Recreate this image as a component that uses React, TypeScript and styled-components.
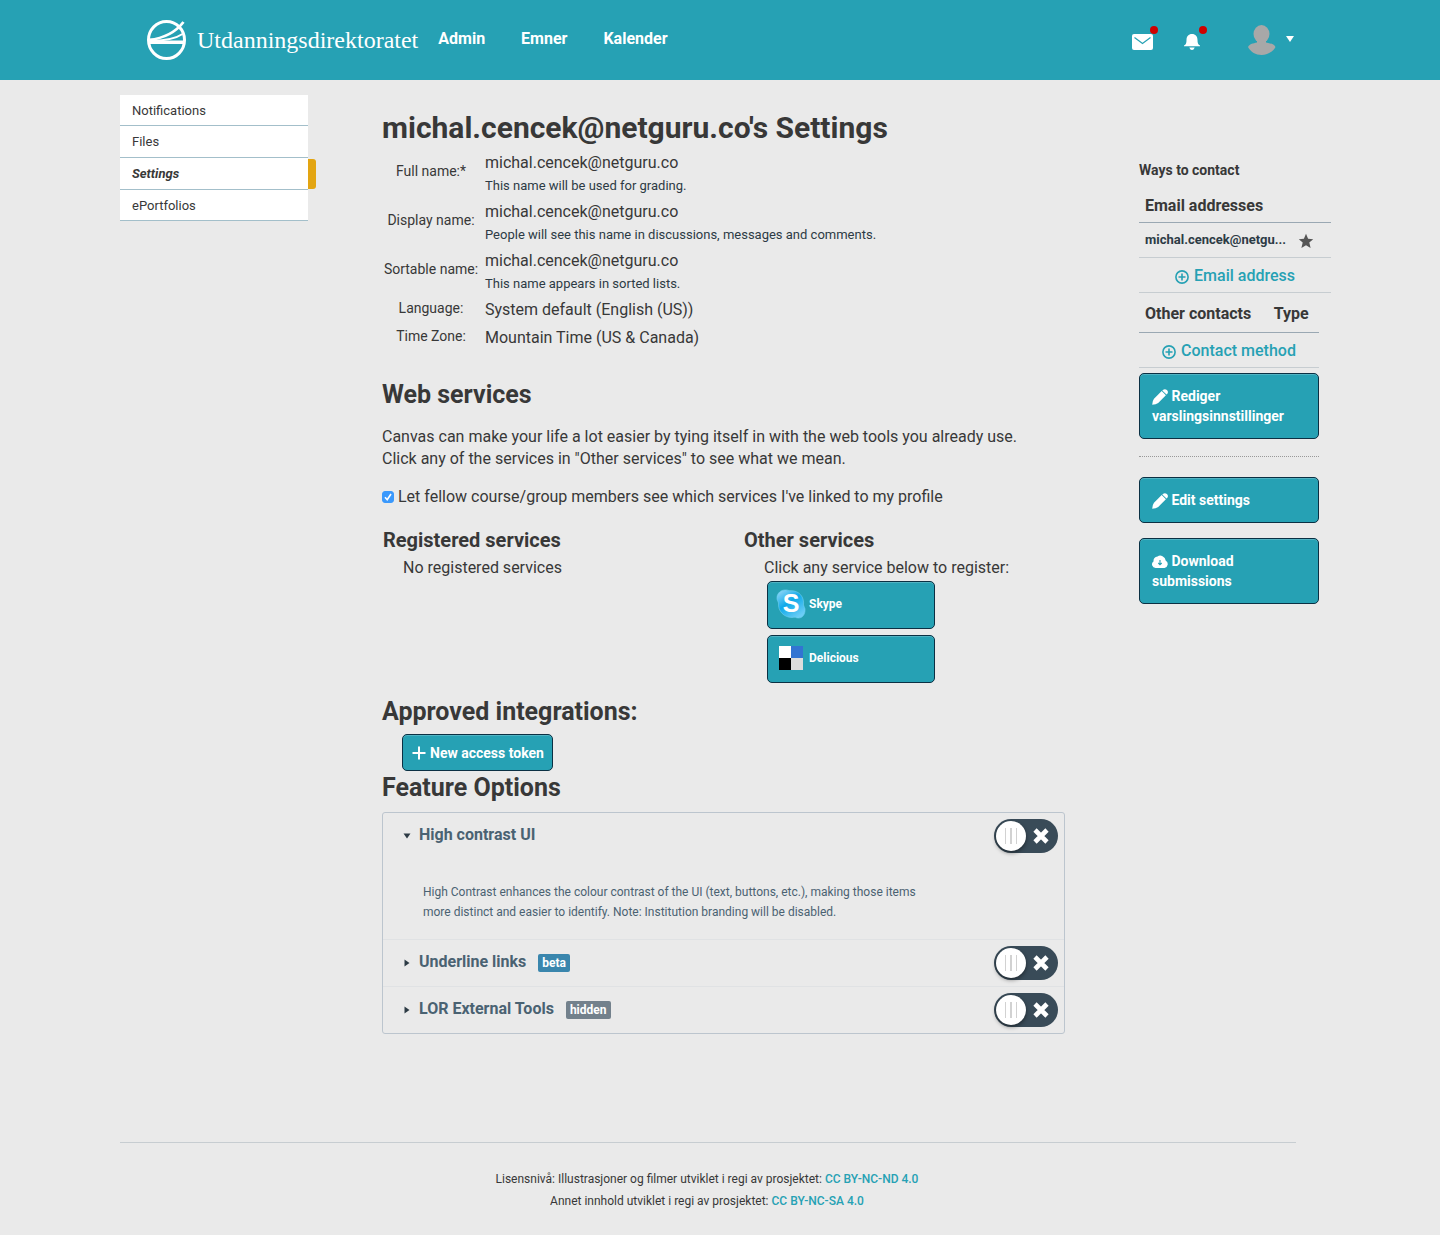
import React, { useState } from "react";
import styled, { createGlobalStyle } from "styled-components";

const teal = "#26a1b4";
const ink = "#383838";

const GlobalStyle = createGlobalStyle`
  *, *::before, *::after { box-sizing: border-box; }
  html { background: #eaeaea; }
  body {
    margin: 0;
    color: ${ink};
    font: 400 16px/22px Roboto, "Liberation Sans", sans-serif;
  }
  a { color: ${teal}; text-decoration: none; }
  button { font: inherit; cursor: pointer; }
`;

const Header = styled.header`
  display: flex;
  align-items: center;
  height: 80px;
  padding: 0 144px 0 146px;
  background: ${teal};
`;

const Brand = styled.a`
  display: flex;
  align-items: center;
  gap: 10px;
  color: #fff;
  font: 400 24px/40px "Liberation Serif", serif;
`;

const Nav = styled.nav`
  display: flex;
  gap: 36px;
  margin-left: 20px;
  padding-bottom: 2px;
`;

const NavLink = styled.a`
  color: #fff;
  font-weight: 700;
`;

const HeaderTools = styled.div`
  display: flex;
  align-items: center;
  margin-left: auto;
`;

const IconButton = styled.button<{ $gap: number }>`
  position: relative;
  display: flex;
  margin: 4px 0 0 ${(p) => p.$gap}px;
  padding: 0;
  border: 0;
  background: none;
`;

const Dot = styled.span`
  position: absolute;
  top: -8px;
  right: -5px;
  width: 8px;
  height: 8px;
  border-radius: 50%;
  background: #d00000;
`;

const UserButton = styled.button`
  display: flex;
  align-items: center;
  gap: 10px;
  margin: 0 0 0 46px;
  padding: 0 2px 0 0;
  border: 0;
  background: none;
`;

const Page = styled.div`
  display: flex;
  align-items: flex-start;
  padding: 15px 121px 0 120px;
`;

const SideMenu = styled.nav`
  flex: 0 0 188px;
  display: flex;
  flex-direction: column;
`;

const SideLink = styled.a<{ $active?: boolean }>`
  position: relative;
  height: 32px;
  padding: 0 12px;
  border-bottom: 1px solid #a3bfca;
  background: #fff;
  color: ${ink};
  font-size: 13px;
  line-height: 31px;
  font-weight: ${(p) => (p.$active ? 700 : 400)};
  font-style: ${(p) => (p.$active ? "italic" : "normal")};
  &:first-child, &:last-child { height: 31px; }
  &::after {
    content: "";
    display: ${(p) => (p.$active ? "block" : "none")};
    position: absolute;
    top: 1px;
    left: 100%;
    width: 8px;
    height: 30px;
    border-radius: 0 3px 3px 0;
    background: #e3a512;
  }
`;

const Main = styled.main`
  flex: 1;
  min-width: 0;
  padding: 13px 74px 0;
`;

const Title = styled.h1`
  margin: 0;
  font-size: 30px;
  line-height: 40px;
  font-weight: 700;
`;

const Heading = styled.h2<{ $top?: number }>`
  margin: ${(p) => p.$top ?? 0}px 0 0;
  font-size: 25px;
  line-height: 34px;
  font-weight: 700;
`;

const SubHeading = styled.h3`
  margin: 0 0 5px;
  font-size: 20px;
  line-height: 24px;
  font-weight: 700;
`;

const Profile = styled.table`
  border-spacing: 0;
  th {
    width: 98px;
    padding: 0 0 3px;
    font-size: 14px;
    line-height: 20px;
    font-weight: 400;
    white-space: nowrap;
  }
  td { padding: 4px 0 2px 5px; }
`;

const Hint = styled.div`
  margin-top: 3px;
  color: #2d3b45;
  font-size: 13px;
  line-height: 18px;
`;

const Intro = styled.p`
  max-width: 660px;
  margin: 14px 0 16px;
`;

const CheckLabel = styled.label`
  display: flex;
  align-items: center;
  gap: 4px;
`;

const Checkbox = styled.input`
  appearance: none;
  width: 12px;
  height: 12px;
  margin: 0;
  border-radius: 3px;
  border: 1px solid #999;
  background: #fff;
  & + svg { margin-left: -16px; display: none; }
  &:checked { border-color: #3b99fc; background: #3b99fc; }
  &:checked + svg { display: block; }
`;

const Services = styled.div`
  display: grid;
  grid-template-columns: 361fr 321fr;
  margin: 20px 0 12px;
  padding-left: 1px;
`;

const Indent = styled.div`
  padding-left: 20px;
`;

const ServiceList = styled.div`
  display: flex;
  flex-direction: column;
  align-items: flex-start;
  gap: 6px;
  padding: 2px 0 0 3px;
`;

const ActionButton = styled.button`
  display: block;
  width: 100%;
  padding: 12px;
  border: 1px solid #0b3043;
  border-radius: 5px;
  background: ${teal};
  box-shadow: inset 0 1px 0 rgba(255, 255, 255, 0.2);
  color: #fff;
  font-size: 14px;
  line-height: 20px;
  font-weight: 700;
  text-align: left;
  svg { vertical-align: -4px; }
`;

const ServiceButton = styled(ActionButton)`
  display: flex;
  align-items: center;
  gap: 3px;
  width: 168px;
  height: 48px;
  padding: 0 8px 2px;
  font-size: 12px;
`;

const TokenButton = styled(ActionButton)`
  display: flex;
  align-items: center;
  gap: 4px;
  width: auto;
  margin-top: 5px;
  padding: 8px 8px 7px 9px;
`;

const Features = styled.div`
  margin-top: 7px;
  border: 1px solid #bcc5ce;
  border-radius: 3px;
`;

const Feature = styled.section`
  & + & { border-top: 1px solid #e0e2e4; }
`;

const FeatureHead = styled.div`
  display: flex;
  align-items: center;
  justify-content: space-between;
  height: 46px;
  padding: 0 6px 0 20px;
`;

const FeatureTitle = styled.button`
  display: flex;
  align-items: center;
  padding: 0 0 3px;
  border: 0;
  background: none;
  color: #4a6272;
  font-weight: 700;
  svg { margin: 3px 8px 0 0; }
`;

const Tag = styled.span<{ $tone: string }>`
  margin: 2px 0 0 12px;
  padding: 0 4px;
  border-radius: 2px;
  background: ${(p) => p.$tone};
  color: #fff;
  font-size: 12px;
  line-height: 18px;
`;

const FeatureText = styled.p`
  max-width: 560px;
  margin: 0;
  padding: 23px 0 17px 40px;
  color: #4a6272;
  font-size: 12px;
  line-height: 20px;
`;

const Toggle = styled.label`
  position: relative;
  display: flex;
  align-items: center;
  width: 64px;
  height: 34px;
  padding: 2px;
  border-radius: 17px;
  background: #394b58;
  cursor: pointer;
  input { position: absolute; opacity: 0; inset: 0; margin: 0; }
`;

const Knob = styled.span`
  display: flex;
  align-items: center;
  justify-content: center;
  width: 30px;
  height: 30px;
  margin-right: 7px;
  border-radius: 50%;
  background: #fff;
  box-shadow: 0 2px 4px rgba(0, 0, 0, 0.45);
`;

const Aside = styled.aside`
  flex: 0 0 180px;
  min-width: 0;
  padding-top: 65px;
`;

const AsideTitle = styled.h2`
  margin: 0 0 6px;
  font-size: 14px;
  line-height: 20px;
  font-weight: 700;
`;

const Contacts = styled.table<{ $width: number; $head: number }>`
  width: ${(p) => p.$width}px;
  border-collapse: separate;
  border-spacing: 0;
  th {
    height: ${(p) => p.$head}px;
    padding: 3px 6px 0;
    border-bottom: 1px solid #9aa8b3;
    text-align: left;
    font-weight: 700;
    white-space: nowrap;
  }
  td {
    height: 35px;
    padding: 0 6px;
    border-bottom: 1px solid #c7cdd1;
  }
  svg { vertical-align: middle; }
`;

const AddressCell = styled.td`
  width: 152px;
  color: #2d3b45;
  font-size: 13px;
  font-weight: 700;
  white-space: nowrap;
`;

const AddLink = styled.a`
  display: flex;
  align-items: center;
  justify-content: center;
  gap: 5px;
  padding-top: 2px;
  font-weight: 500;
  svg { margin-top: 2px; }
`;

const Actions = styled.div`
  display: flex;
  flex-direction: column;
  gap: 15px;
  margin-top: 5px;
`;

const Divider = styled.hr`
  width: 100%;
  margin: 2px 0 5px;
  border: 0;
  border-top: 1px dotted #999;
`;

const Footer = styled.footer`
  margin: 108px 144px 0 120px;
  padding: 25px 2px 24px 0;
  border-top: 1px solid #c7cdd1;
  font-size: 12px;
  line-height: 22px;
  text-align: center;
  p { margin: 0; }
  a { font-weight: 500; }
`;

const Logo = () => (
  <svg width="41" height="42" viewBox="0 0 41 42" fill="none" stroke="#fff" aria-hidden="true">
    <ellipse cx="20.500" cy="21" rx="18" ry="18.500" strokeWidth="3" />
    <path d="M3 21C16 19.500 29 14 37.500 3" strokeWidth="2.800" />
    <path d="M6 22C19 21.500 30 19.500 36.500 15" strokeWidth="2" />
    <path d="M3 23.300H38" strokeWidth="3.400" />
  </svg>
);

const Mail = () => (
  <svg width="21" height="16" viewBox="0 0 21 16" aria-hidden="true">
    <rect width="21" height="16" rx="2" fill="#fff" />
    <path d="M2.500 3.500L10.500 9.500L18.500 3.500" fill="none" stroke={teal} strokeWidth="1.200" />
  </svg>
);

const Bell = () => (
  <svg width="18" height="16" viewBox="0 0 18 16" fill="#fff" aria-hidden="true">
    <path d="M0 12.300V11.500C2 10.500 2.500 9 2.500 6C2.500 2.500 4.500 0 8 0S13.500 2.500 13.500 6C13.500 9 14 10.500 16 11.500V12.300ZM5.300 13.500H10.700C10 15.200 9.200 16 8 16S6 15.200 5.300 13.500Z" />
  </svg>
);

const Avatar = () => (
  <svg width="28" height="30" viewBox="0 0 28 30" fill="#a8a8a8" aria-hidden="true">
    <ellipse cx="13.500" cy="9" rx="8" ry="9" />
    <path d="M9 14H18V17.500C22 18.500 26 18.500 27.500 22C25 27 19 30 13.500 30S2.500 27 0 22C2 18.500 5 18.500 9 17.500Z" />
  </svg>
);

const Caret = () => (
  <svg width="8" height="8" viewBox="0 0 8 8" fill="#fff" aria-hidden="true">
    <path d="M0 0H8L4 6Z" />
  </svg>
);

const Pencil = () => (
  <svg width="16" height="16" viewBox="0 0 16 16" fill="#fff" aria-hidden="true">
    <path d="M0.200 15.800Q0.300 11.800 2 9.700L9.700 2L13.900 6.200L6.200 13.900Q4 15.600 0.200 15.800ZM10.300 1.400L11.200 0.700Q13-0.500 14.900 1T15.200 4.900L14.500 5.600Z" />
  </svg>
);

const Cloud = () => (
  <svg width="16" height="16" viewBox="0 0 16 16" aria-hidden="true">
    <path d="M3.800 14A3.600 3.600 0 0 1 1.500 7.500A5 4.800 0 0 1 5.500 2.500Q8 0.800 10.500 2.300Q13.300 3.500 13.800 6.800A3.900 3.900 0 0 1 12.500 14Z" fill="#fff" />
    <path d="M8 6V10.500M6.300 9L8 10.800L9.700 9" fill="none" stroke={teal} strokeWidth="1.100" />
  </svg>
);

const Plus = () => (
  <svg width="14" height="14" viewBox="0 0 14 14" stroke="#fff" strokeWidth="2" aria-hidden="true">
    <path d="M7 0.500V13.500M0.500 7H13.500" />
  </svg>
);

const CirclePlus = () => (
  <svg width="14" height="14" viewBox="0 0 14 14" fill="none" stroke={teal} strokeWidth="1.600" aria-hidden="true">
    <circle cx="7" cy="7" r="6.100" />
    <path d="M7 3.500V10.500M3.500 7H10.500" />
  </svg>
);

const Star = () => (
  <svg width="16" height="16" viewBox="0 0 16 16" fill="#555" aria-label="Default" role="img">
    <path d="M8 0.800L10.100 5.800L15.200 6.200L11.300 9.600L12.600 15L8 12.200L3.400 15L4.700 9.600L0.800 6.200L5.900 5.800Z" />
  </svg>
);

const Skype = () => (
  <svg width="30" height="30" viewBox="0 0 30 30" aria-hidden="true">
    <defs>
      <linearGradient id="skype" x1="0" y1="0" x2="0.700" y2="1">
        <stop offset="0" stopColor="#9fdcf8" />
        <stop offset="0.500" stopColor="#0fa9ea" />
        <stop offset="1" stopColor="#6bcdf6" />
      </linearGradient>
    </defs>
    <g fill="url(#skype)" stroke="#6fd0f2" strokeWidth="0.600">
      <path d="M9 1C12 0.500 12 2 15 1.700C23 1.500 28.500 8 27.500 16C28 18 29.500 19 29 22C28.500 27 25 30 20.500 28.700C19 28 18 28.500 16 28.500C8 28.500 1.800 22 2.500 14C2 12 0.500 11 1 8C1.500 4 5 1 9 1Z" />
    </g>
    <text x="15" y="23" textAnchor="middle" fill="#fff" fontFamily="Liberation Sans, sans-serif" fontWeight="700" fontSize="25">S</text>
  </svg>
);

const Delicious = () => (
  <svg width="30" height="24" viewBox="0 0 30 24" aria-hidden="true">
    <path d="M3 0H15V12H3Z" fill="#fff" />
    <path d="M15 0H27V12H15Z" fill="#3274d2" />
    <path d="M3 12H15V24H3Z" fill="#000" />
    <path d="M15 12H27V24H15Z" fill="#ddd" />
  </svg>
);

const Disclosure = ({ open }: { open: boolean }) => (
  <svg width="8" height="8" viewBox="0 0 8 8" fill="#2d3b45" aria-hidden="true">
    <path d={open ? "M0.500 1.500H7.500L4 6.500Z" : "M1.500 0.500V7.500L6.500 4Z"} />
  </svg>
);

const Grip = () => (
  <svg width="12" height="16" viewBox="0 0 12 16" fill="#d2d2d2" aria-hidden="true">
    <path d="M0 0H1V16H0ZM5 0H7V16H5ZM11 0H12V16H11Z" />
  </svg>
);

const Cross = () => (
  <svg width="16" height="16" viewBox="0 0 16 16" stroke="#fff" strokeWidth="4.600" aria-hidden="true">
    <path d="M2 2L14 14M14 2L2 14" />
  </svg>
);

const profileRows = [
  { label: "Full name:*", value: "michal.cencek@netguru.co", hint: "This name will be used for grading." },
  { label: "Display name:", value: "michal.cencek@netguru.co", hint: "People will see this name in discussions, messages and comments." },
  { label: "Sortable name:", value: "michal.cencek@netguru.co", hint: "This name appears in sorted lists." },
  { label: "Language:", value: "System default (English (US))" },
  { label: "Time Zone:", value: "Mountain Time (US & Canada)" },
];

const features = [
  {
    name: "High contrast UI",
    text: "High Contrast enhances the colour contrast of the UI (text, buttons, etc.), making those items more distinct and easier to identify. Note: Institution branding will be disabled.",
  },
  { name: "Underline links", tag: "beta", tone: "#3a86ad" },
  { name: "LOR External Tools", tag: "hidden", tone: "#73818c" },
];

export default function App() {
  const [open, setOpen] = useState("High contrast UI");
  return (
    <>
      <GlobalStyle />
      <Header>
        <Brand href="#"><Logo />Utdanningsdirektoratet</Brand>
        <Nav>
          <NavLink href="#">Admin</NavLink>
          <NavLink href="#">Emner</NavLink>
          <NavLink href="#">Kalender</NavLink>
        </Nav>
        <HeaderTools>
          <IconButton $gap={0} aria-label="Messages"><Mail /><Dot /></IconButton>
          <IconButton $gap={31} aria-label="Notifications"><Bell /><Dot /></IconButton>
          <UserButton aria-label="Account"><Avatar /><Caret /></UserButton>
        </HeaderTools>
      </Header>
      <Page>
        <SideMenu>
          <SideLink href="#">Notifications</SideLink>
          <SideLink href="#">Files</SideLink>
          <SideLink href="#" $active>Settings</SideLink>
          <SideLink href="#">ePortfolios</SideLink>
        </SideMenu>
        <Main>
          <Title>michal.cencek@netguru.co's Settings</Title>
          <Profile>
            <tbody>
              {profileRows.map((row) => (
                <tr key={row.label}>
                  <th scope="row">{row.label}</th>
                  <td>
                    {row.value}
                    {row.hint && <Hint>{row.hint}</Hint>}
                  </td>
                </tr>
              ))}
            </tbody>
          </Profile>
          <Heading $top={27}>Web services</Heading>
          <Intro>
            Canvas can make your life a lot easier by tying itself in with the web tools you already use.
            Click any of the services in "Other services" to see what we mean.
          </Intro>
          <CheckLabel>
            <Checkbox type="checkbox" defaultChecked />
            <svg width="12" height="12" viewBox="0 0 12 12" fill="none" stroke="#fff" strokeWidth="1.600" aria-hidden="true">
              <path d="M3 6.300L5.200 8.800L9 3" />
            </svg>
            Let fellow course/group members see which services I've linked to my profile
          </CheckLabel>
          <Services>
            <div>
              <SubHeading>Registered services</SubHeading>
              <Indent>No registered services</Indent>
            </div>
            <div>
              <SubHeading>Other services</SubHeading>
              <Indent>
                Click any service below to register:
                <ServiceList>
                  <ServiceButton><Skype />Skype</ServiceButton>
                  <ServiceButton><Delicious />Delicious</ServiceButton>
                </ServiceList>
              </Indent>
            </div>
          </Services>
          <Heading>Approved integrations:</Heading>
          <Indent><TokenButton><Plus />New access token</TokenButton></Indent>
          <Heading>Feature Options</Heading>
          <Features>
            {features.map((f) => (
              <Feature key={f.name}>
                <FeatureHead>
                  <FeatureTitle aria-expanded={open === f.name} onClick={() => setOpen(open === f.name ? "" : f.name)}>
                    <Disclosure open={open === f.name} />
                    {f.name}
                    {f.tag && <Tag $tone={f.tone!}>{f.tag}</Tag>}
                  </FeatureTitle>
                  <Toggle>
                    <input type="checkbox" aria-label={f.name} />
                    <Knob><Grip /></Knob>
                    <Cross />
                  </Toggle>
                </FeatureHead>
                {open === f.name && f.text && <FeatureText>{f.text}</FeatureText>}
              </Feature>
            ))}
          </Features>
        </Main>
        <Aside>
          <AsideTitle>Ways to contact</AsideTitle>
          <Contacts $width={192} $head={37}>
            <thead><tr><th colSpan={2}>Email addresses</th></tr></thead>
            <tbody>
              <tr>
                <AddressCell>michal.cencek@netgu...</AddressCell>
                <td><Star /></td>
              </tr>
              <tr><td colSpan={2}><AddLink href="#"><CirclePlus />Email address</AddLink></td></tr>
            </tbody>
          </Contacts>
          <Contacts $width={180} $head={40}>
            <thead><tr><th>Other contacts</th><th>Type</th></tr></thead>
            <tbody>
              <tr><td colSpan={2}><AddLink href="#"><CirclePlus />Contact method</AddLink></td></tr>
            </tbody>
          </Contacts>
          <Actions>
            <ActionButton><Pencil /> Rediger varslingsinnstillinger</ActionButton>
            <Divider />
            <ActionButton><Pencil /> Edit settings</ActionButton>
            <ActionButton><Cloud /> Download submissions</ActionButton>
          </Actions>
        </Aside>
      </Page>
      <Footer>
        <p>Lisensnivå: Illustrasjoner og filmer utviklet i regi av prosjektet: <a href="#">CC BY-NC-ND 4.0</a></p>
        <p>Annet innhold utviklet i regi av prosjektet: <a href="#">CC BY-NC-SA 4.0</a></p>
      </Footer>
    </>
  );
}
